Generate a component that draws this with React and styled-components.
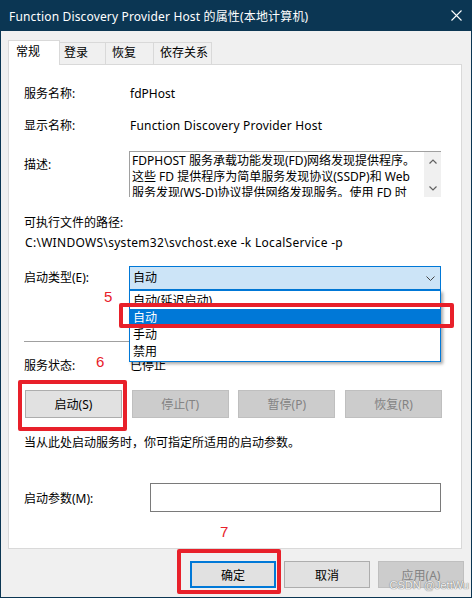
import React from "react";
import styled, { createGlobalStyle } from "styled-components";

const GlobalStyle = createGlobalStyle`
  html, body {
    margin: 0;
    padding: 0;
    background: #f0f0f0;
  }
  body {
    font-family: "Noto Sans", "Noto Sans CJK SC", sans-serif;
    font-size: 12px;
    color: #000;
  }
  * {
    box-sizing: border-box;
  }
`;

const tabs = [
  { name: "常规", width: 52, pad: 7, active: true },
  { name: "登录", width: 46, pad: 4 },
  { name: "恢复", width: 48, pad: 6 },
  { name: "依存关系", width: 58, pad: 6 },
];

const descLines = [
  "FDPHOST 服务承载功能发现(FD)网络发现提供程序。",
  "这些 FD 提供程序为简单服务发现协议(SSDP)和 Web",
  "服务发现(WS-D)协议提供网络发现服务。使用 FD 时",
];

const startTypes = ["自动(延迟启动)", "自动", "手动", "禁用"];

function App() {
  return (
    <>
      <GlobalStyle />
      <Window>
        <TitleBar>
          <Title>Function Discovery Provider Host 的属性(本地计算机)</Title>
          <CloseButton>
            <svg width="11" height="11" viewBox="0 0 11 11">
              <path d="M0.5 0.5 L10.5 10.5 M10.5 0.5 L0.5 10.5" stroke="#fff" strokeWidth="1.1" fill="none" />
            </svg>
          </CloseButton>
        </TitleBar>
        <Body>
          <TabBar>
            {tabs.map((t) => (
              <Tab key={t.name} $active={t.active} $width={t.width} $pad={t.pad}>
                {t.name}
              </Tab>
            ))}
          </TabBar>
          <Panel>
            <Row>
              <Label>服务名称:</Label>
              <Value>fdPHost</Value>
            </Row>
            <Row $mt={16}>
              <Label>显示名称:</Label>
              <Value $track={0.19}>Function Discovery Provider Host</Value>
            </Row>
            <Row $mt={17} $align="flex-start">
              <Label $pt={6}>描述:</Label>
              <DescBox>
                <DescText>
                  {descLines.map((l) => (
                    <div key={l}>{l}</div>
                  ))}
                </DescText>
                <ScrollBar>
                  <svg width="8" height="5" viewBox="0 0 8 5">
                    <path d="M0.5 4.5 L4 1 L7.5 4.5" stroke="#606060" strokeWidth="1.2" fill="none" />
                  </svg>
                  <svg width="8" height="5" viewBox="0 0 8 5">
                    <path d="M0.5 0.5 L4 4 L7.5 0.5" stroke="#606060" strokeWidth="1.2" fill="none" />
                  </svg>
                </ScrollBar>
              </DescBox>
            </Row>
            <Text $mt={18}>可执行文件的路径:</Text>
            <Text $mt={4} $pl={1} $track={0.3}>
              C:\WINDOWS\system32\svchost.exe -k LocalService -p
            </Text>
            <Row $mt={15}>
              <Label>启动类型(E):</Label>
              <ComboWrap>
                <Combo>
                  <span>自动</span>
                  <svg width="9" height="5" viewBox="0 0 9 5">
                    <path d="M0.5 0.5 L4.5 4.5 L8.5 0.5" stroke="#444" strokeWidth="1" fill="none" />
                  </svg>
                </Combo>
                <DropList>
                  {startTypes.map((s, i) => (
                    <DropItem key={s} $selected={i === 1}>
                      {s}
                      {i === 1 && <Marker $inset="-6px -14px -2px -11px" />}
                    </DropItem>
                  ))}
                </DropList>
              </ComboWrap>
            </Row>
            <Separator />
            <Row $mt={16}>
              <Label>服务状态:</Label>
              <Value>已停止</Value>
            </Row>
            <ButtonRow>
              <Slot>
                <Button $width={97}>启动(S)</Button>
                <Marker $inset="-10px -5px -13px -7px" />
              </Slot>
              <Button $width={97} disabled>停止(T)</Button>
              <Button $width={97} disabled>暂停(P)</Button>
              <Button $width={97} disabled>恢复(R)</Button>
            </ButtonRow>
            <Text $mt={17}>当从此处启动服务时，你可指定所适用的启动参数。</Text>
            <Row $mt={32} $align="flex-start">
              <Label $width={126} $pt={8}>启动参数(M):</Label>
              <ParamInput />
            </Row>
            <StepNumber $left={95} $top={224}>5</StepNumber>
            <StepNumber $left={87} $top={289}>6</StepNumber>
            <StepNumber $left={211} $top={459}>7</StepNumber>
          </Panel>
          <Footer>
            <Slot>
              <Button $width={86} $height={27} $default>确定</Button>
              <Marker $inset="-12px -5px -6px -13px" />
            </Slot>
            <Button $width={86} $height={27}>取消</Button>
            <Button $width={86} $height={27} disabled>应用(A)</Button>
          </Footer>
        </Body>
        <Watermark>CSDN @JettWu</Watermark>
      </Window>
    </>
  );
}

export default App;

const Window = styled.div`
  position: relative;
  width: 472px;
  height: 598px;
  display: flex;
  flex-direction: column;
  border: 1px solid #0b3653;
  border-top: none;
  background: #f0f0f0;
  overflow: hidden;
`;

const TitleBar = styled.div`
  height: 31px;
  flex: none;
  display: flex;
  align-items: center;
  justify-content: space-between;
  padding-left: 8px;
  background: #0b3653;
`;

const Title = styled.div`
  color: #fff;
  font-size: 12px;
  letter-spacing: 0.16px;
  white-space: nowrap;
`;

const CloseButton = styled.div`
  width: 30px;
  height: 31px;
  display: flex;
  align-items: center;
  justify-content: center;
`;

const Body = styled.div`
  flex: 1;
  display: flex;
  flex-direction: column;
  padding: 9px 7px 0 7px;
`;

const TabBar = styled.div`
  height: 25px;
  display: flex;
  align-items: flex-end;
  margin-bottom: -1px;
  position: relative;
  z-index: 1;
`;

const Tab = styled.div`
  width: ${(p) => p.$width}px;
  height: ${(p) => (p.$active ? 25 : 22)}px;
  margin-bottom: ${(p) => (p.$active ? 0 : 1)}px;
  padding-left: ${(p) => p.$pad}px;
  padding-top: ${(p) => (p.$active ? 3 : 2)}px;
  line-height: 16px;
  white-space: nowrap;
  background: ${(p) => (p.$active ? "#fff" : "#f0f0f0")};
  border-top: 1px solid #d9d9d9;
  border-right: 1px solid #d9d9d9;
  border-left: ${(p) => (p.$active ? "1px solid #d9d9d9" : "none")};
`;

const Panel = styled.div`
  position: relative;
  width: 454px;
  height: 485px;
  flex: none;
  background: #fff;
  border: 1px solid #d9d9d9;
  padding: 21px 0 0 15px;
`;

const Row = styled.div`
  display: flex;
  align-items: ${(p) => p.$align || "center"};
  margin-top: ${(p) => p.$mt || 0}px;
`;

const Label = styled.div`
  width: ${(p) => p.$width || 106}px;
  flex: none;
  line-height: 16px;
  padding-top: ${(p) => p.$pt || 0}px;
  white-space: nowrap;
`;

const Value = styled.div`
  line-height: 16px;
  letter-spacing: ${(p) => p.$track || 0}px;
  white-space: nowrap;
`;

const Text = styled.div`
  line-height: 16px;
  margin-top: ${(p) => p.$mt || 0}px;
  padding-left: ${(p) => p.$pl || 0}px;
  letter-spacing: ${(p) => p.$track || 0}px;
  white-space: nowrap;
`;

const DescBox = styled.div`
  margin-left: -1px;
  width: 312px;
  height: 46px;
  display: flex;
  border-top: 1px solid #a0a0a0;
  border-left: 1px solid #a0a0a0;
  overflow: hidden;
`;

const DescText = styled.div`
  flex: 1;
  padding: 1px 0 0 2px;
  line-height: 16px;
  white-space: nowrap;
  overflow: hidden;
`;

const ScrollBar = styled.div`
  width: 17px;
  flex: none;
  background: #f0f0f0;
  display: flex;
  flex-direction: column;
  align-items: center;
  justify-content: space-between;
  padding: 7px 0 6px;
`;

const ComboWrap = styled.div`
  position: relative;
  margin-left: -1px;
`;

const Combo = styled.div`
  width: 312px;
  height: 24px;
  display: flex;
  align-items: center;
  justify-content: space-between;
  padding: 0 5px 0 3px;
  background: #cce4f7;
  border: 1px solid #0078d7;
  line-height: 16px;
`;

const DropList = styled.div`
  position: absolute;
  top: 100%;
  left: 0;
  width: 312px;
  padding: 1px 0;
  background: #fff;
  border: 1px solid #0078d7;
  box-shadow: 2px 2px 3px rgba(0, 0, 0, 0.35);
  z-index: 2;
`;

const DropItem = styled.div`
  position: relative;
  height: 17px;
  line-height: 17px;
  padding-left: 3px;
  background: ${(p) => (p.$selected ? "#0078d7" : "transparent")};
  color: ${(p) => (p.$selected ? "#fff" : "#000")};
`;

const Marker = styled.div`
  position: absolute;
  inset: ${(p) => p.$inset};
  border: 4px solid #e8202a;
  border-radius: 2px;
  pointer-events: none;
  z-index: 3;
`;

const Separator = styled.div`
  margin-top: 51px;
  width: 417px;
  height: 1px;
  background: #a0a0a0;
`;

const ButtonRow = styled.div`
  margin: 16px 0 0 1px;
  width: 417px;
  display: flex;
  justify-content: space-between;
`;

const Slot = styled.div`
  position: relative;
  display: flex;
`;

const Button = styled.button`
  width: ${(p) => p.$width}px;
  height: ${(p) => p.$height || 28}px;
  font: inherit;
  font-size: 12px;
  padding: 0;
  color: #000;
  background: #e1e1e1;
  border: ${(p) => (p.$default ? "2px solid #0078d7" : "1px solid #adadad")};
  &:disabled {
    background: #cccccc;
    border-color: #bfbfbf;
    color: #838383;
  }
`;

const ParamInput = styled.div`
  width: 291px;
  height: 29px;
  background: #fff;
  border: 1px solid #7a7a7a;
`;

const StepNumber = styled.div`
  position: absolute;
  left: ${(p) => p.$left}px;
  top: ${(p) => p.$top}px;
  font-family: "Liberation Sans", sans-serif;
  font-size: 15px;
  line-height: 16px;
  color: #e8202a;
`;

const Footer = styled.div`
  margin-top: 12px;
  display: flex;
  justify-content: flex-end;
  gap: 8px;
`;

const Watermark = styled.div`
  position: absolute;
  right: 2px;
  bottom: 6px;
  font-family: "Liberation Sans", sans-serif;
  font-size: 11px;
  white-space: nowrap;
  color: #f2f2f2;
  text-shadow: 0 0 1px #777, 0 0 1px #777;
  z-index: 4;
`;
